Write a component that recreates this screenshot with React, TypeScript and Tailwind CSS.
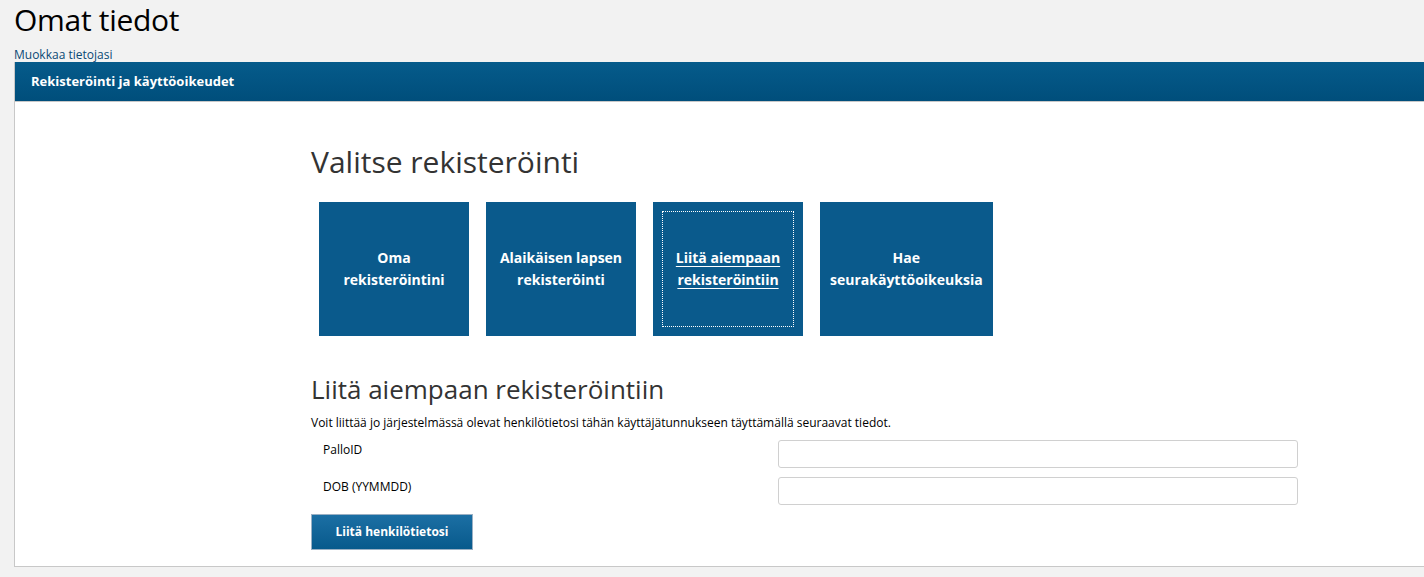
import React from 'react';

const cards = [
  { label: 'Oma rekisteröintini', lines: ['Oma', 'rekisteröintini'] },
  { label: 'Alaikäisen lapsen rekisteröinti', lines: ['Alaikäisen lapsen', 'rekisteröinti'] },
  { label: 'Liitä aiempaan rekisteröintiin', lines: ['Liitä aiempaan', 'rekisteröintiin'], active: true },
  { label: 'Hae seurakäyttöoikeuksia', lines: ['Hae', 'seurakäyttöoikeuksia'] },
];

export default function App() {
  return (
    <div className="min-h-screen bg-[#f2f2f2] text-[#333] font-['Open_Sans','Noto_Sans',sans-serif] pl-[14px] pb-[9px]">
      <h1 className="text-[30px] leading-[40px] text-black tracking-[-0.3px]">Omat tiedot</h1>
      <a href="#" className="block mt-[7px] text-[12px] leading-[15px] text-[#0b4a75]">
        Muokkaa tietojasi
      </a>

      <section className="bg-white border-l border-b border-[#c8c8c8]">
        <div className="h-[40px] flex items-center px-[16px] bg-gradient-to-b from-[#065b8b] to-[#004e7b] border-b border-[#c8c8c8]">
          <span className="text-white font-bold text-[13px]">Rekisteröinti ja käyttöoikeudet</span>
        </div>

        <div className="pl-[296px] pt-[40px] pb-[16px]">
          <h2 className="text-[30px] leading-[40px] text-[#333]">Valitse rekisteröinti</h2>

          <div className="flex gap-[17px] mt-[20px] pl-[8px]">
            {cards.map((c) => (
              <a
                key={c.label}
                href="#"
                className="min-w-[150px] h-[134px] px-[10px] bg-[#0a5a8c] text-white font-bold text-[14px] leading-[22px] flex items-center justify-center text-center relative"
              >
                {c.active && (
                  <span className="absolute inset-[9px] border border-dotted border-white" />
                )}
                <span className={c.active ? 'underline underline-offset-[3px]' : ''}>
                  {c.lines[0]}
                  <br />
                  {c.lines[1]}
                </span>
              </a>
            ))}
          </div>

          <h2 className="text-[26px] leading-[34px] mt-[36px] text-[#333]">Liitä aiempaan rekisteröintiin</h2>
          <p className="text-[12px] leading-[16px] mt-[9px] text-black">
            Voit liittää jo järjestelmässä olevat henkilötietosi tähän käyttäjätunnukseen täyttämällä seuraavat tiedot.
          </p>

          <div className="mt-[9px] w-[987px] flex flex-col gap-[9px]">
            <div className="flex items-center">
              <label className="w-[467px] pl-[12px] text-[12px] text-black -mt-[8px]">PalloID</label>
              <input className="w-[520px] h-[28px] border border-[#d0d0d0] rounded-[3px] bg-white" />
            </div>
            <div className="flex items-center">
              <label className="w-[467px] pl-[12px] text-[12px] text-black -mt-[8px]">DOB (YYMMDD)</label>
              <input className="w-[520px] h-[28px] border border-[#d0d0d0] rounded-[3px] bg-white" />
            </div>
          </div>

          <button className="mt-[9px] w-[162px] h-[36px] bg-gradient-to-b from-[#1b6fa4] to-[#075a8c] border border-[#9ab0c4] text-white font-bold text-[12px]">
            Liitä henkilötietosi
          </button>
        </div>
      </section>
    </div>
  );
}
